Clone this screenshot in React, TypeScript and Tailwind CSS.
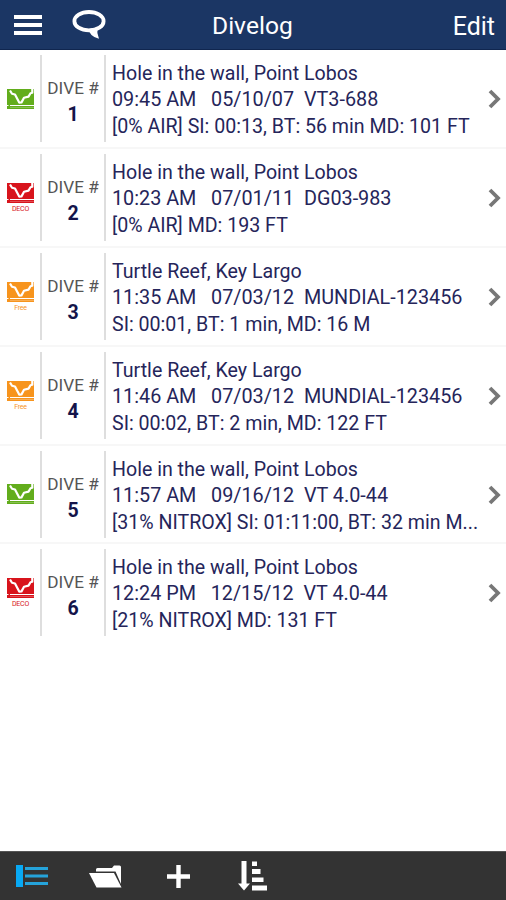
import React from "react";

interface Dive {
  number: number;
  kind: "normal" | "deco" | "free";
  site: string;
  time: string;
  date: string;
  computer: string;
  stats: string;
}

const dives: Dive[] = [
  {
    number: 1,
    kind: "normal",
    site: "Hole in the wall, Point Lobos",
    time: "09:45 AM",
    date: "05/10/07",
    computer: "VT3-688",
    stats: "[0% AIR] SI: 00:13, BT: 56 min MD: 101 FT",
  },
  {
    number: 2,
    kind: "deco",
    site: "Hole in the wall, Point Lobos",
    time: "10:23 AM",
    date: "07/01/11",
    computer: "DG03-983",
    stats: "[0% AIR] MD: 193 FT",
  },
  {
    number: 3,
    kind: "free",
    site: "Turtle Reef, Key Largo",
    time: "11:35 AM",
    date: "07/03/12",
    computer: "MUNDIAL-123456",
    stats: "SI: 00:01, BT: 1 min, MD: 16 M",
  },
  {
    number: 4,
    kind: "free",
    site: "Turtle Reef, Key Largo",
    time: "11:46 AM",
    date: "07/03/12",
    computer: "MUNDIAL-123456",
    stats: "SI: 00:02, BT: 2 min, MD: 122 FT",
  },
  {
    number: 5,
    kind: "normal",
    site: "Hole in the wall, Point Lobos",
    time: "11:57 AM",
    date: "09/16/12",
    computer: "VT 4.0-44",
    stats: "[31% NITROX] SI: 01:11:00, BT: 32 min M...",
  },
  {
    number: 6,
    kind: "deco",
    site: "Hole in the wall, Point Lobos",
    time: "12:24 PM",
    date: "12/15/12",
    computer: "VT 4.0-44",
    stats: "[21% NITROX] MD: 131 FT",
  },
];

const kinds = {
  normal: { color: "text-[#62ad1c]", label: "" },
  deco: { color: "text-[#d8141c]", label: "DECO" },
  free: { color: "text-[#f7941d]", label: "Free" },
};

const DiveIcon = ({ kind }: { kind: Dive["kind"] }) => {
  const { color, label } = kinds[kind];

  return (
    <div className={`flex w-[27px] flex-col items-center ${color}`}>
      <svg className="h-5 w-[27px]" viewBox="0 0 27 20" fill="none">
        <path d="M0 0H27V20H0Z" fill="currentColor" />
        <path d="M0 16.5H1.5M3 16.5H27" stroke="white" strokeWidth="1" />
        <path d="M3 18.5H27" stroke="white" strokeWidth="0.6" opacity="0.4" />
        <path
          d="M3 1.5L5 4.8L8 5.5L12.2 13.6L14.5 13.4L17 8.8L21.5 7.6L23.5 4.2L25.3 3.8V0"
          stroke="white"
          strokeWidth="2.2"
          strokeLinejoin="round"
        />
      </svg>
      {label && (
        <span className="mt-[3px] text-[7px] leading-[6px] tracking-[-0.2px]">
          {label}
        </span>
      )}
    </div>
  );
};

const DiveRow = ({ dive }: { dive: Dive }) => (
  <li className="flex h-[98.9px] items-start border-b-2 border-[#f7f7f7] pt-[5px] last:border-b-0">
    <div className="flex h-[87px] w-10 shrink-0 items-center justify-center pl-[1px]">
      <DiveIcon kind={dive.kind} />
    </div>
    <div className="flex h-[87px] w-[66px] shrink-0 flex-col items-center border-x-2 border-[#dedede] pt-[21px]">
      <span className="text-[17.2px] leading-6 whitespace-nowrap text-[#555]">
        DIVE #
      </span>
      <span className="pt-px text-[19.5px] leading-[27px] font-bold text-[#14144a]">
        {dive.number}
      </span>
    </div>
    <div className="min-w-0 flex-1 pt-1.5 pl-1.5 text-[19.6px] whitespace-pre text-[#25255a]">
      <p className="leading-[26px]">{dive.site}</p>
      <p className="text-[19.8px] leading-[26px]">
        {dive.time}
        {"   "}
        {dive.date}
        {"  "}
        {dive.computer}
      </p>
      <p className="leading-7">{dive.stats}</p>
    </div>
    <svg
      className="mt-[34px] mr-[5px] h-5 w-[13px] shrink-0"
      viewBox="0 0 13 20"
      fill="none"
    >
      <path d="M2 2L10 10L2 18" stroke="#777" strokeWidth="3.8" />
    </svg>
  </li>
);

const Header = () => (
  <header className="flex h-[50px] items-center border-b border-[#10264f] bg-[#1b3664] text-white">
    <button className="ml-[14px] flex w-7 flex-col gap-1" aria-label="Menu">
      <span className="h-1 bg-white" />
      <span className="h-1 bg-white" />
      <span className="h-1 bg-white" />
    </button>
    <button className="ml-[30px]" aria-label="Search">
      <svg className="h-[29px] w-[34px]" viewBox="0 0 34 29" fill="none">
        <ellipse cx="17" cy="11.2" rx="14.6" ry="9.2" stroke="white" strokeWidth="3.8" />
        <path d="M16.5 19L25.5 17.5Q24.5 23 27 28.8Q17.5 26.5 16.5 19Z" fill="white" />
      </svg>
    </button>
    <h1 className="ml-[106px] pt-1 text-[24.6px]">Divelog</h1>
    <button className="mr-[11px] ml-auto pt-1 text-[25px]">Edit</button>
  </header>
);

const Toolbar = () => (
  <footer className="flex h-[49px] items-center border-t border-[#555] bg-[#333]">
    <svg className="ml-4 h-[22px] w-8" viewBox="0 0 32 22">
      <path d="M0 0H7V22H0Z" fill="#08a9f4" />
      <path d="M9 2H32V5H9ZM9 9.5H32V12.5H9ZM9 17H32V20H9Z" fill="#25a3da" />
    </svg>
    <svg className="ml-[41px] h-[23px] w-[33px]" viewBox="0 0 33 23" fill="white">
      <path d="M7 6.5V4.5Q7 3 8.5 3H23L25 0.5H30.5Q32 0.5 32 2V19L26.5 6.5Z" />
      <path d="M0 8H25L32.5 22.5H7.5Z" />
    </svg>
    <svg className="ml-[45px] h-[23px] w-[23px]" viewBox="0 0 23 23">
      <path d="M11.5 0V23M0 11.5H23" stroke="white" strokeWidth="4.4" />
    </svg>
    <svg className="ml-12 h-[30px] w-[29px]" viewBox="0 0 29 30" fill="white">
      <path d="M3.5 0H8.5V22.5H12L6 29.5L0 22.5H3.5Z" />
      <path d="M14 0.5H19V5H14ZM14 8H22.5V13H14ZM14 16.5H25.5V21H14ZM14 24.5H29V29.5H14Z" />
    </svg>
  </footer>
);

export default function App() {
  return (
    <div className="flex h-[900px] w-[506px] flex-col overflow-hidden bg-white font-['Roboto',sans-serif]">
      <Header />
      <ul className="flex-1">
        {dives.map((dive) => (
          <DiveRow key={dive.number} dive={dive} />
        ))}
      </ul>
      <Toolbar />
    </div>
  );
}
